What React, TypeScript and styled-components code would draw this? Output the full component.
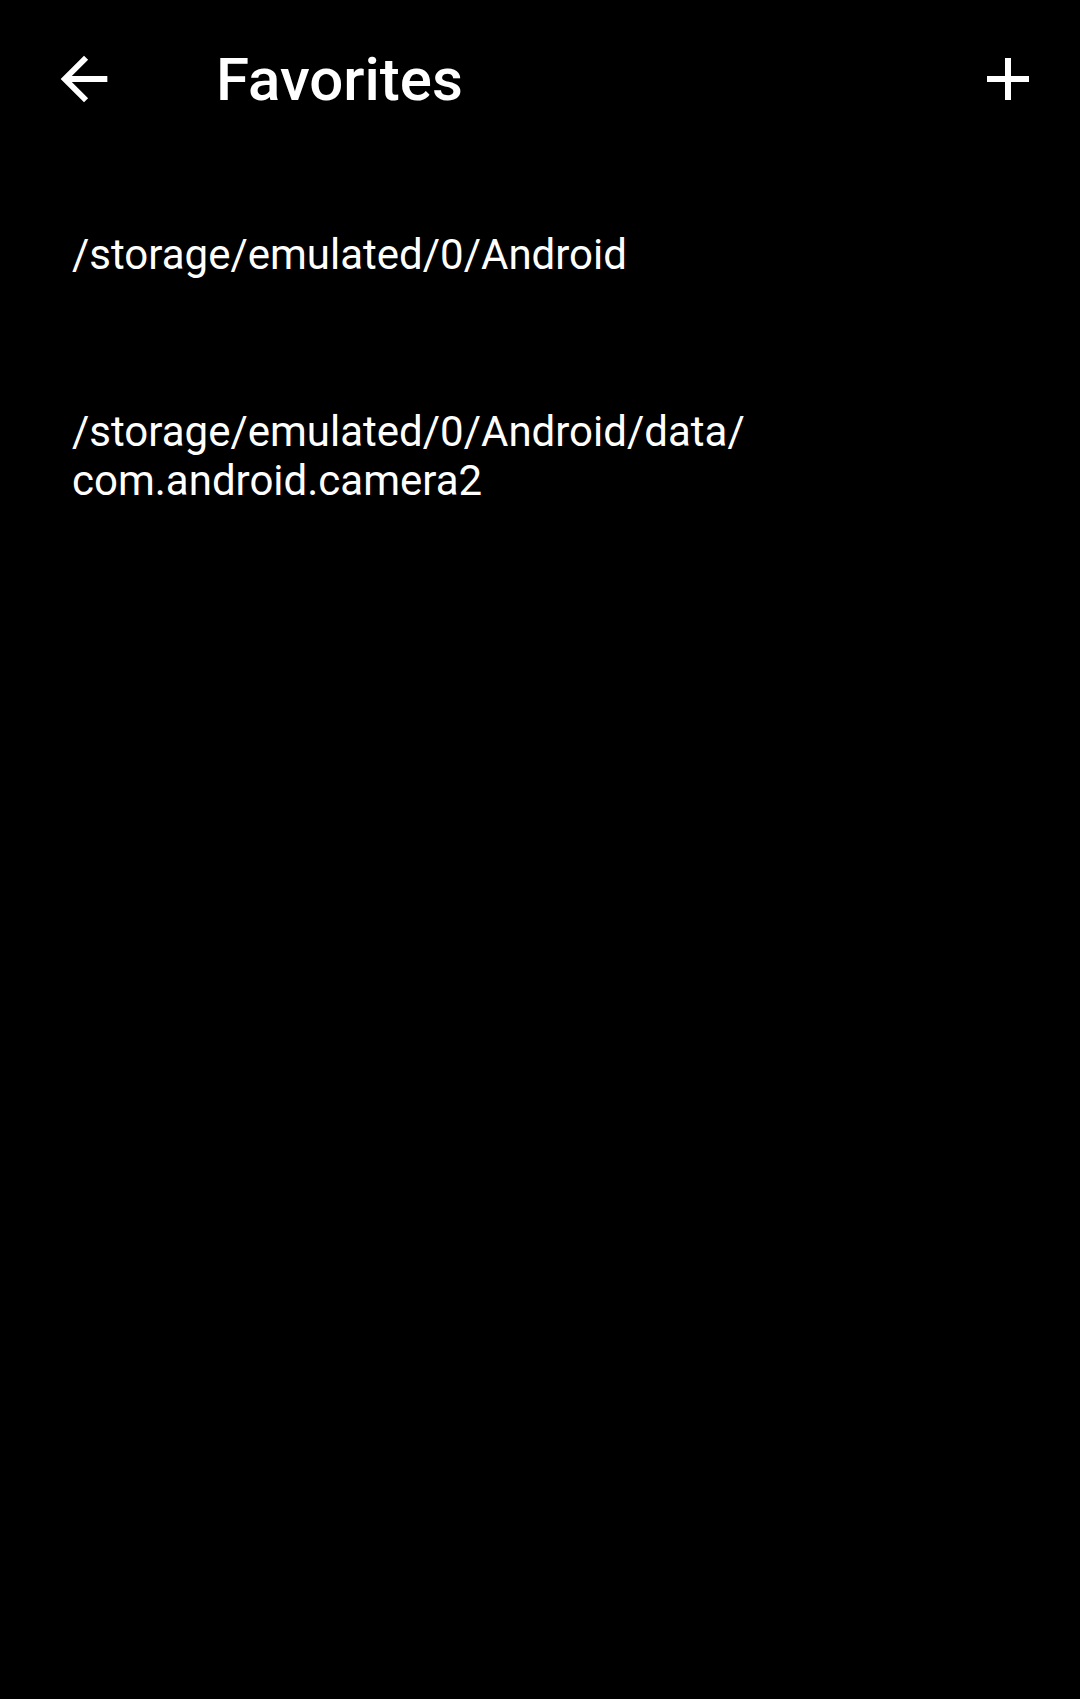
import React from "react";
import styled, { createGlobalStyle } from "styled-components";

const GlobalStyle = createGlobalStyle`
  html, body {
    margin: 0;
    padding: 0;
    background: #000;
  }
  body {
    font-family: Roboto, "Noto Sans", sans-serif;
    color: #fff;
  }
`;

const Screen = styled.div`
  width: 1080px;
  min-height: 1699px;
  background: #000;
`;

// Top app bar
const Toolbar = styled.header`
  display: flex;
  align-items: center;
  height: 158px;
`;

const IconButton = styled.button<{ $width: number }>`
  display: flex;
  align-items: center;
  justify-content: center;
  width: ${(p) => p.$width}px;
  height: 158px;
  padding: 0;
  border: none;
  background: transparent;
  color: #fff;
  flex-shrink: 0;
`;

const Title = styled.h1`
  flex: 1;
  margin: 2px 0 0 48px;
  font-size: 60px;
  font-weight: 500;
  line-height: 1;
  color: #fff;
`;

const List = styled.ul`
  list-style: none;
  margin: 0;
  padding: 8px 0 0;
`;

const Item = styled.li`
  padding: 64px 72px;
  font-size: 42px;
  line-height: 49px;
  color: #fff;
`;

const BackIcon = () => (
  <svg width="70" height="70" viewBox="0 0 24 24" fill="#fff">
    <path d="M20 11H7.83l5.59-5.59L12 4l-8 8 8 8 1.41-1.41L7.83 13H20v-2z" />
  </svg>
);

const AddIcon = () => (
  <svg width="72" height="72" viewBox="0 0 24 24" fill="#fff">
    <path d="M19 13h-6v6h-2v-6H5v-2h6V5h2v6h6v2z" />
  </svg>
);

const favorites = [
  ["/storage/emulated/0/Android"],
  ["/storage/emulated/0/Android/data/", "com.android.camera2"],
];

export default function App() {
  return (
    <>
      <GlobalStyle />
      <Screen>
        <Toolbar>
          <IconButton $width={168}>
            <BackIcon />
          </IconButton>
          <Title>Favorites</Title>
          <IconButton $width={144}>
            <AddIcon />
          </IconButton>
        </Toolbar>
        <List>
          {favorites.map((lines, i) => (
            <Item key={i}>
              {lines.map((line, j) => (
                <React.Fragment key={j}>
                  {j > 0 && <br />}
                  {line}
                </React.Fragment>
              ))}
            </Item>
          ))}
        </List>
      </Screen>
    </>
  );
}
